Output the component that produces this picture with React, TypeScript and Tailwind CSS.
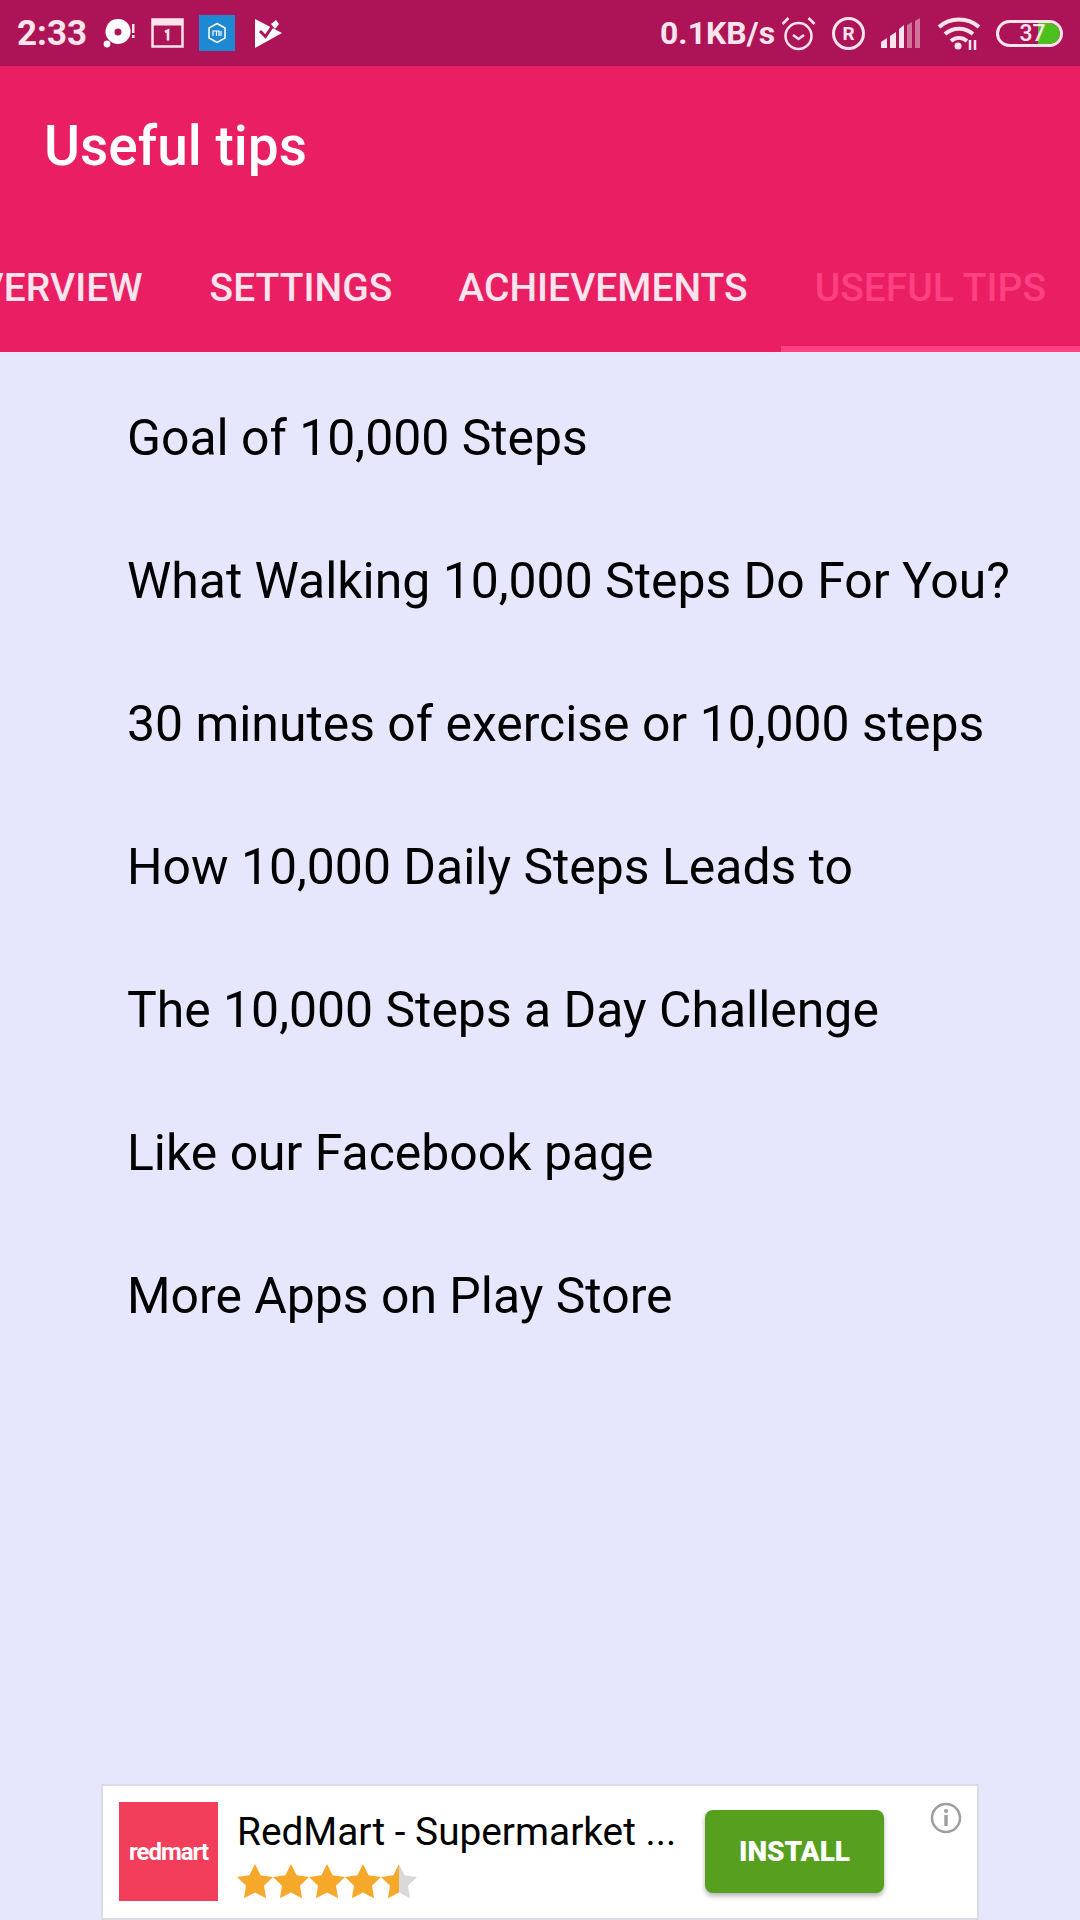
import React from "react";

const tips = [
  "Goal of 10,000 Steps",
  "What Walking 10,000 Steps Do For You?",
  "30 minutes of exercise or 10,000 steps",
  "How 10,000 Daily Steps Leads to",
  "The 10,000 Steps a Day Challenge",
  "Like our Facebook page",
  "More Apps on Play Store",
];

const starPath = "M18 0l5.600 11.200 12.400 1.800-9 8.800 2.100 12.400L18 28.400 6.900 34.200 9 21.800 0 13l12.400-1.800z";

function StatusLeft() {
  return (
    <div className="flex items-center">
      <span className="w-[70px] ml-[17px] text-[35px] leading-none font-bold text-[#fce4ec] whitespace-nowrap">2:33</span>
      {/* disc */}
      <svg className="ml-[16px]" width="34" height="30" viewBox="0 0 34 30" fill="none">
        <path fillRule="evenodd" d="M15 1a12.500 12.500 0 1 1-8 22A12.500 12.500 0 0 1 15 1zm0 9.500a3.500 3.500 0 1 0 0 7 3.500 3.500 0 0 0 0-7z" fill="#fff" />
        <circle cx="4" cy="26" r="3.400" fill="#fff" />
        <rect x="29" y="6" width="2.500" height="9" fill="#fce4ec" />
        <rect x="29" y="17" width="2.500" height="3" fill="#fce4ec" />
      </svg>
      {/* calendar */}
      <svg className="ml-[14px]" width="33" height="30" viewBox="0 0 33 30" fill="none">
        <rect x="1.500" y="1.500" width="30" height="27" stroke="#fce4ec" strokeWidth="2.500" />
        <rect x="1.500" y="1.500" width="30" height="6" fill="#fce4ec" />
        <path d="M14 14l3-1.500v10" stroke="#fce4ec" strokeWidth="2.600" />
      </svg>
      {/* mi */}
      <div className="ml-[15px] w-[36px] h-[36px] bg-[#1e88d2] flex items-center justify-center">
        <svg width="20" height="22" viewBox="0 0 20 22" fill="none">
          <path d="M10 1.500l8 4.500v10l-8 4.500-8-4.500V6z" stroke="#fff" strokeWidth="1.500" />
          <path d="M6 14V9h3.500v5M9.500 9H12v5M14 9v5" stroke="#fff" strokeWidth="1.200" />
        </svg>
      </div>
      {/* check tag */}
      <svg className="ml-[20px]" width="27" height="29" viewBox="0 0 27 29" fill="none">
        <path d="M0 0l27 14L0 29z" fill="#fff" />
        <path d="M5 12l5.500 5.500L21 2" stroke="#ad1457" strokeWidth="3" />
        <path d="M16 5l5-4 3 4-4 5z" fill="#fff" />
      </svg>
    </div>
  );
}

function StatusRight() {
  return (
    <div className="flex items-center">
      <span className="text-[32px] leading-none font-bold text-[#fce4ec] w-[121px] whitespace-nowrap">0.1KB/s</span>
      {/* alarm */}
      <svg width="35" height="36" viewBox="0 0 35 36" fill="none" stroke="#fce4ec" strokeWidth="2.500">
        <circle cx="17.500" cy="21" r="13" />
        <path d="M12 20l5.500 4 5.500-4" />
        <path d="M1.500 9l6-6M33.500 9l-6-6" />
      </svg>
      {/* R */}
      <div className="ml-[16px] w-[33px] h-[33px] rounded-full border-[3px] border-[#fce4ec] flex items-center justify-center text-[19px] leading-none font-bold text-[#fce4ec]">
        R
      </div>
      {/* signal */}
      <svg className="ml-[16px]" width="40" height="30" viewBox="0 0 40 30" fill="#fce4ec">
        <path d="M0 24l6-4v10H0z" />
        <path d="M9 18l6-4v16H9z" />
        <path d="M18 11l5-4v23h-5z" />
        <path d="M26 7l5-3v26h-5z" opacity=".45" />
        <path d="M34 3l5-3v30h-5z" opacity=".45" />
      </svg>
      {/* wifi */}
      <svg className="ml-[16px]" width="44" height="34" viewBox="0 0 44 34" fill="none" stroke="#fce4ec" strokeWidth="4">
        <path d="M2 11c11-10 29-10 40 0" />
        <path d="M8 18c8-7 20-7 28 0" />
        <path d="M14 25c5-4 11-4 16 0" />
        <circle cx="21" cy="30" r="3.500" fill="#fce4ec" stroke="none" />
        <path d="M33 24v10M38 24v10" strokeWidth="2.500" />
      </svg>
      {/* battery */}
      <div className="relative ml-[15px] w-[67px] h-[27px] rounded-full border-[3px] border-[#fce4ec] overflow-hidden flex items-center justify-center">
        <div className="absolute right-0 top-0 bottom-0 w-[22px] rounded-r-full bg-[#4cc01e]" />
        <span className="relative text-[23px] leading-none font-medium text-[#fce4ec] pl-[6px]">37</span>
      </div>
    </div>
  );
}

function Stars() {
  return (
    <div className="flex">
      {[0, 1, 2, 3, 4].map((i) => (
        <svg key={i} width="36" height="35" viewBox="0 0 36 35">
          <defs>
            <linearGradient id={"star" + i}>
              <stop offset={i === 4 ? "0.5" : "1"} stopColor="#f5a82a" />
              <stop offset={i === 4 ? "0.5" : "1"} stopColor="#d9d9d9" />
            </linearGradient>
          </defs>
          <path d={starPath} fill={"url(#star" + i + ")"} />
        </svg>
      ))}
    </div>
  );
}

export default function App() {
  return (
    <div className="w-[1080px] h-[1920px] flex flex-col overflow-hidden bg-[#e6e6fc] font-['Roboto',sans-serif]">
      {/* Status bar */}
      <div className="h-[66px] bg-[#ad1457] flex items-center justify-between pr-[17px] flex-shrink-0">
        <StatusLeft />
        <StatusRight />
      </div>

      {/* App bar */}
      <div className="h-[286px] bg-[#e91e63] flex flex-col flex-shrink-0">
        <div className="h-[160px] flex items-center pl-[44px] text-[55px] font-medium text-white leading-none">
          Useful tips
        </div>
        <div className="flex-1 flex justify-end overflow-hidden text-[39px] font-medium leading-none">
          <div className="flex h-full pl-[33px] pr-[34px] items-center pb-[2px] text-[#fce4ec] whitespace-nowrap">OVERVIEW</div>
          <div className="flex h-full pl-[33px] pr-[33px] items-center pb-[2px] text-[#fce4ec] whitespace-nowrap">SETTINGS</div>
          <div className="flex h-full px-[33px] items-center pb-[2px] text-[#fce4ec] whitespace-nowrap">ACHIEVEMENTS</div>
          <div className="flex h-full px-[34px] items-center border-b-[6px] border-[#ff4081] pt-[4px] text-[#ff4081] whitespace-nowrap">USEFUL TIPS</div>
        </div>
      </div>

      {/* Tips list */}
      <div className="flex-1 pt-[15px] pl-[127px]">
        {tips.map((tip) => (
          <div key={tip} className="h-[143px] flex items-center text-[49.900px] leading-none text-black whitespace-nowrap">
            {tip}
          </div>
        ))}
      </div>

      {/* Ad banner */}
      <div className="h-[136px] mx-[101px] bg-white border-2 border-[#dcdce6] flex items-start relative flex-shrink-0">
        <div className="ml-[16px] mt-[16px] w-[99px] h-[99px] bg-[#f23e5a] flex items-center justify-center text-[24px] font-bold tracking-[-1px] text-white leading-none flex-shrink-0">
          redmart
        </div>
        <div className="ml-[19px] mt-[22px] w-[468px] flex-shrink-0">
          <div className="text-[38.800px] leading-[47px] text-black whitespace-nowrap">RedMart - Supermarket ...</div>
          <div className="mt-[9px]"><Stars /></div>
        </div>
        <div className="mt-[24px] w-[179px] h-[83px] rounded-[8px] bg-[#57a01f] shadow-[0_3px_5px_rgba(0,0,0,0.3)] flex items-center justify-center text-[28px] font-black text-white leading-none flex-shrink-0">
          INSTALL
        </div>
        <div className="absolute right-[15px] top-[16px] w-[32px] h-[32px]">
          <svg width="32" height="32" viewBox="0 0 32 32" fill="none">
            <circle cx="16" cy="16" r="14" stroke="#9e9e9e" strokeWidth="2.500" />
            <rect x="14.300" y="13" width="3.400" height="11" fill="#9e9e9e" />
            <circle cx="16" cy="9" r="2" fill="#9e9e9e" />
          </svg>
        </div>
      </div>
    </div>
  );
}
